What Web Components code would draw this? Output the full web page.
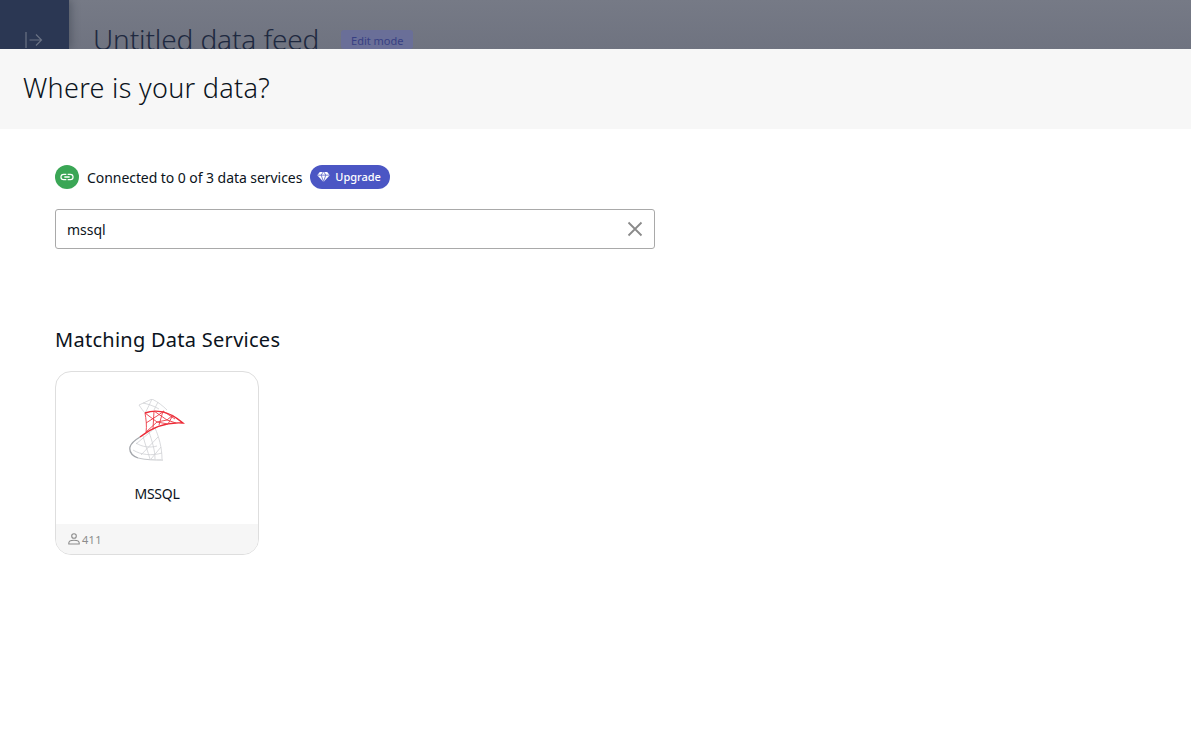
<!DOCTYPE html>
<html>
<head>
<meta charset="utf-8">
<title>Where is your data?</title>
<style>
  html, body { margin: 0; height: 100%; background: #fff; }
  body { font-family: "Noto Sans", sans-serif; color: #0b1320; overflow: hidden; }
</style>
</head>
<body>
<feed-backdrop></feed-backdrop>
<source-modal>
  <connection-status slot="status" connected="0" total="3"></connection-status>
  <search-box slot="search" value="mssql"></search-box>
  <service-card slot="results" name="MSSQL" users="411"></service-card>
</source-modal>

<script>
customElements.define('feed-backdrop', class FeedBackdrop extends HTMLElement {
  connectedCallback() {
    const root = this.attachShadow({mode: 'open'})
    root.innerHTML = `
    <style>
      :host { display: flex; height: 49px; overflow: hidden; background: linear-gradient(#767a86, #6f7380); }
      .rail { width: 69px; flex: none; background: #2b3753; display: flex; justify-content: center; padding: 32px 2px 0 0; box-sizing: border-box; box-shadow: 2px 0 8px rgba(30,36,50,.35); }
      .main { display: flex; align-items: flex-start; padding: 21px 0 0 24px; }
      h1 { margin: 0; font-size: 28px; font-weight: 300; line-height: 36px; color: #1e2940; letter-spacing: -.12px; white-space: nowrap; }
      .tag { margin: 9px 0 0 22px; height: 19px; width: 72px; box-sizing: border-box; background: #6a6f98; border-radius: 3px; color: #373f83; font-size: 11px; line-height: 21px; text-align: center; white-space: nowrap; }
    </style>
    <div class="rail">
      <svg width="18" height="16" viewBox="0 0 18 16" fill="none" stroke="#6a7284" stroke-width="1.2">
        <path d="M1 0v16M4.500 8h12M11 2.500 16.500 8 11 13.500"/>
      </svg>
    </div>
    <div class="main"><h1>Untitled data feed</h1><span class="tag">Edit mode</span></div>`
  }
})

customElements.define('source-modal', class SourceModal extends HTMLElement {
  connectedCallback() {
    const root = this.attachShadow({mode: 'open'})
    root.innerHTML = `
    <style>
      :host { display: block; }
      header { height: 80px; background: #f7f7f7; padding: 0 23px; display: flex; align-items: center; }
      h2 { margin: 0 0 4px; font-size: 27px; font-weight: 300; color: #0b1320; letter-spacing: .3px; }
      .body { padding: 36px 55px; }
      .status { margin-bottom: 20px; }
      h3 { margin: 79px 0 19px; font-size: 20px; line-height: 24px; font-weight: 400; color: #0b1320; letter-spacing: .27px; }
    </style>
    <header><h2>Where is your data?</h2></header>
    <div class="body">
      <div class="status"><slot name="status"></slot></div>
      <slot name="search"></slot>
      <h3>Matching Data Services</h3>
      <slot name="results"></slot>
    </div>`
  }
})

customElements.define('connection-status', class ConnectionStatus extends HTMLElement {
  connectedCallback() {
    const connected = this.getAttribute('connected')
    const total = this.getAttribute('total')
    const root = this.attachShadow({mode: 'open'})
    root.innerHTML = `
    <style>
      :host { display: flex; align-items: center; height: 24px; font-size: 14px; color: #0b1320; letter-spacing: -.06px; }
      .dot { width: 24px; height: 24px; border-radius: 50%; background: #3aa655; display: flex; align-items: center; justify-content: center; margin-right: 8px; }
      .pill { margin-left: 8px; height: 24px; width: 80px; box-sizing: border-box; border-radius: 12px; background: #4b56c4; color: #fff; display: flex; align-items: center; padding: 0 0 0 7px; gap: 5px; font-size: 11px; font-weight: 500; letter-spacing: 0; }
      .pill span { margin-top: -2px; }
    </style>
    <span class="dot">
      <svg width="16" height="16" viewBox="0 0 24 24" fill="#fff"><path d="M3.900 12c0-1.710 1.390-3.100 3.100-3.100h4V7H7a5 5 0 0 0 0 10h4v-1.900H7c-1.710 0-3.100-1.390-3.100-3.100zM8 13h8v-2H8v2zm9-6h-4v1.900h4c1.710 0 3.100 1.390 3.100 3.100s-1.390 3.100-3.100 3.100h-4V17h4a5 5 0 0 0 0-10z"/></svg>
    </span>
    <span>Connected to ${connected} of ${total} data services</span>
    <div class="pill">
      <svg width="13" height="12" viewBox="0 0 14 12"><path fill="#fff" d="M3 .500h8L13.700 4 7 11.500.300 4z"/><path fill="none" stroke="#4b56c4" stroke-width=".8" d="M.500 4h13M4.500 4 7 11 9.500 4 7.500 .700M4.500 4 6.500 .700"/></svg>
      <span>Upgrade</span>
    </div>`
  }
})

customElements.define('search-box', class SearchBox extends HTMLElement {
  connectedCallback() {
    const root = this.attachShadow({mode: 'open'})
    root.innerHTML = `
    <style>
      :host { display: flex; align-items: center; justify-content: space-between; width: 600px; height: 40px; box-sizing: border-box; border: 1px solid #a9a9a9; border-radius: 3px; padding: 0 11px; background: #fff; font-size: 14px; color: #0b1320; }
      svg { display: block; }
    </style>
    <span>${this.getAttribute('value')}</span>
    <svg width="16" height="16" viewBox="0 0 16 16" fill="none" stroke="#8a8a8a" stroke-width="1.800"><path d="M1.500 1.500l13 13M14.500 1.500l-13 13"/></svg>`
  }
})

customElements.define('service-card', class ServiceCard extends HTMLElement {
  connectedCallback() {
    const root = this.attachShadow({mode: 'open'})
    root.innerHTML = `
    <style>
      :host { display: block; width: 204px; height: 184px; box-sizing: border-box; border: 1px solid #dedede; border-radius: 16px; overflow: hidden; background: #fff; }
      .top { height: 152px; display: flex; flex-direction: column; align-items: center; box-sizing: border-box; padding-top: 27px; }
      .name { margin-top: 21px; font-size: 14px; line-height: 20px; color: #0b1320; letter-spacing: -.3px; }
      .foot { height: 30px; background: #f6f6f6; display: flex; align-items: center; padding-left: 11px; gap: 1px; font-size: 11px; letter-spacing: .3px; color: #8c8c8c; }
      svg { display: block; }
    </style>
    <div class="top">
      <svg width="56" height="64" viewBox="0 0 56 64" fill="none">
        <g stroke="#cfd1d4" stroke-width=".8">
          <path d="M10 6 23 0c6 3 11 7 15 11M10 6c2 3 4 6 6 8M23 0c-2 4-4 9-7 14M14 4c5 1 11 3 16 6M29 3l-4 8"/>
          <path d="M26 29c4 9 7 20 7 31M20 33c3 9 6 18 6 27M14 37c2 8 5 16 7 23M7 44c6 4 14 5 21 3M4 51c8 5 19 6 29 3M26 29 7 45M29 38 12 56M32 48 22 60"/>
        </g>
        <path d="M11 38C6 41 2 44 1 48c-1 5 3 9 8 11" stroke="#a4a7ac" stroke-width="1.300"/>
        <path d="M9 59c8 2 16 2 25 2" stroke="#c4c6ca" stroke-width="1"/>
        <path d="M16 14c8-3 22-4 38 10-14-1-28 2-43 14" stroke="#ec2a36" stroke-width="1.400"/>
        <g stroke="#ec3a45" stroke-width=".9">
          <path d="M16 14c1 6 2 12 1 20M25 12l-1 18M34 12l-4 14M44 16l-5 9"/>
          <path d="M16 14l12 9 11 2M25 12l13 9 9 3M34 12l12 8M17 24l11-7 7-5M17 33l11-10 10-2 6-5"/>
        </g>
      </svg>
      <div class="name">${this.getAttribute('name')}</div>
    </div>
    <div class="foot">
      <svg width="14" height="14" viewBox="0 0 14 14" fill="none" stroke="#8c8c8c" stroke-width="1.100"><circle cx="7" cy="4" r="2.300"/><path d="M1.800 12v-1c0-1.800 2.400-2.800 5.200-2.800s5.200 1 5.200 2.800v1z"/></svg>
      <span>${this.getAttribute('users')}</span>
    </div>`
  }
})
</script>
</body>
</html>
